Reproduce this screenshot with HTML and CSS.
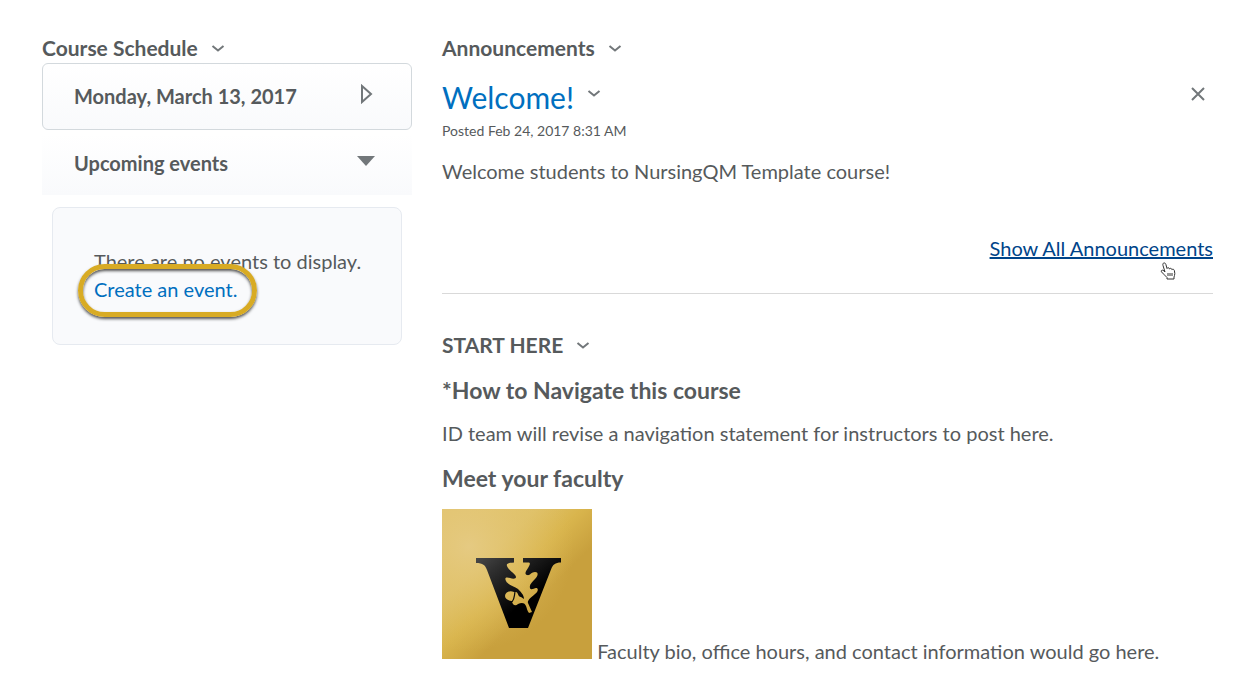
FILE: index.html
```
<!DOCTYPE html>
<html lang="en">
<head>
  <meta charset="UTF-8">
  <meta name="viewport" content="width=device-width, initial-scale=1.0">
  <title>Course Home</title>
  <link rel="stylesheet" href="styles.css">
</head>
<body>
  <div class="homepage">
    <aside class="sidebar">
      <div class="widget-header">
        <h2>Course Schedule</h2>
        <button type="button" class="icon-btn" aria-label="Course Schedule actions">
          <svg class="chevron" viewBox="0 0 16 9"><path d="M2.500 2L8 6.500 13.500 2"/></svg>
        </button>
      </div>

      <button type="button" class="date-bar">
        <span>Monday, March 13, 2017</span>
        <svg class="arrow-right" viewBox="0 0 20 20"><path d="M6 2v16l9-8z"/></svg>
      </button>

      <button type="button" class="events-bar">
        <span>Upcoming events</span>
        <svg class="arrow-down" viewBox="0 0 20 20"><path d="M1 5h18l-9 10z"/></svg>
      </button>

      <div class="events-box">
        <p>There are no events to display.</p>
        <p><a href="#" class="create-link">Create an event.<span class="highlight"></span></a></p>
      </div>
    </aside>

    <main class="content">
      <section class="announcements">
        <div class="widget-header">
          <h2>Announcements</h2>
          <button type="button" class="icon-btn" aria-label="Announcements actions">
            <svg class="chevron" viewBox="0 0 16 9"><path d="M2.500 2L8 6.500 13.500 2"/></svg>
          </button>
        </div>

        <div class="title-row">
          <h3><a href="#">Welcome!</a></h3>
          <button type="button" class="icon-btn" aria-label="Welcome actions">
            <svg class="chevron" viewBox="0 0 16 9"><path d="M2.500 2L8 6.500 13.500 2"/></svg>
          </button>
          <button type="button" class="icon-btn close-btn" aria-label="Dismiss">
            <svg class="close" viewBox="0 0 14 14"><path d="M1 1l12 12M13 1L1 13"/></svg>
          </button>
        </div>
        <p class="posted">Posted Feb 24, 2017 8:31 AM</p>
        <p>Welcome students to NursingQM Template course!</p>

        <div class="show-all">
          <a href="#">Show All Announcements
            <svg class="cursor" viewBox="0 0 16 18"><path d="M5 10L3 3.500C2.600 2 3 1.300 3.800 1c1-.3 1.800.4 2.100 1.500L7 6.500c.3-1.200 2.300-1 2.500.4.700-1 2.200-.6 2.400.7.900-.8 2.300-.2 2.500 1l.4 3c.1 1.500-.6 2.400-.8 3.400V17H7v-1.500C5.500 14 3.300 11.800 1.600 10 .8 9 1.500 8 2.700 8.200c1 .2 1.700 1.100 2.300 1.800M8 11v3M10 11v3M12 11v3"/></svg>
          </a>
        </div>
      </section>

      <section class="start-here">
        <div class="widget-header">
          <h2>START HERE</h2>
          <button type="button" class="icon-btn" aria-label="Start Here actions">
            <svg class="chevron" viewBox="0 0 16 9"><path d="M2.500 2L8 6.500 13.500 2"/></svg>
          </button>
        </div>
        <h3>*How to Navigate this course</h3>
        <p>ID team will revise a navigation statement for instructors to post here.</p>
        <h3>Meet your faculty</h3>
        <div class="faculty">
          <svg class="logo" viewBox="0 0 150 150" role="img" aria-label="Vanderbilt logo">
            <defs>
              <linearGradient id="gold" x1="0.1" y1="0.1" x2="0.8" y2="0.8">
                <stop offset="0" stop-color="#e3c778"/>
                <stop offset="0.3" stop-color="#dfc26b"/>
                <stop offset="0.52" stop-color="#d9b54d"/>
                <stop offset="0.75" stop-color="#c8a03d"/>
                <stop offset="1" stop-color="#c8a03d"/>
              </linearGradient>
              <radialGradient id="shine" cx="0.18" cy="0.25" r="0.7">
                <stop offset="0" stop-color="#e5ca82"/>
                <stop offset="1" stop-color="#e0bd5a" stop-opacity="0"/>
              </radialGradient>
              <linearGradient id="ink" x1="0" y1="0" x2="0.6" y2="0.6">
                <stop offset="0" stop-color="#484848"/>
                <stop offset="0.3" stop-color="#303030"/>
                <stop offset="1" stop-color="#000"/>
              </linearGradient>
              <mask id="leaf">
                <rect width="150" height="150" fill="#fff"/>
                <path d="M72 48h9v5.500h5c3 0 2 2.500 0 5.500-2 3-4 6-1 7 3 1 4-3 8-3 4 0 3 4 0 7s-6 6-5 9c1 3 4 0 6 0 3 0 2 4-1 6-3 3-8 6-7 9l4 9-3 1c-2-2-2-5-3-7-2-4-5-3-8-2-3 3-6 0-6-3-3 0-7-2-7-5 0-4 5-6 9-4l2 0c2 0 2 5 5 5l3 2c0-4-3-7-6-10-4-3-10-4-12-8-2-4 1-4 4-3 3 1 6 1 6-1 0-3-8-7-9-11-1-3 2-3 7-3.500z" fill="#000"/>
                <path d="M73 83c-1 4 0 6-3 10" fill="none" stroke="#fff" stroke-width="1.200"/>
              </mask>
            </defs>
            <rect width="150" height="150" fill="url(#gold)"/>
            <rect width="150" height="150" fill="url(#shine)"/>
            <path mask="url(#leaf)" fill="url(#ink)" d="M34 49h85v4.500c-6 0-8 2-10 7L86 119H67L45 61c-2-5-4-7-11-7z"/>
          </svg>
          Faculty bio, office hours, and contact information would go here.
        </div>
      </section>
    </main>
  </div>
</body>
</html>
```
FILE: styles.css
```
/* General Styles */
* {
  margin: 0;
  padding: 0;
  box-sizing: border-box;
}

body {
  font-family: Lato, sans-serif;
  font-size: 20px;
  line-height: 28px;
  color: #565a5c;
  background: white;
}

a {
  color: #006fbf;
  text-decoration: none;
}

button {
  font: inherit;
  color: inherit;
  background: none;
  border: none;
  cursor: pointer;
}

svg {
  fill: none;
}

.homepage {
  display: grid;
  grid-template-columns: 12fr 25fr;
  gap: 30px;
  padding: 34px 29px 28px 42px;
}

/* Widget headers */
.widget-header {
  display: flex;
  align-items: center;
  gap: 12px;
}

h2 {
  font-size: 21px;
  line-height: 28px;
}

.icon-btn {
  display: flex;
}

.chevron {
  width: 16px;
  height: 9px;
  stroke: #72777a;
  stroke-width: 2;
}

/* Course Schedule */
.date-bar,
.events-bar {
  display: flex;
  justify-content: space-between;
  align-items: center;
  width: 100%;
  font-weight: bold;
  text-align: left;
  background: linear-gradient(white, #f9fafc);
}

.date-bar {
  margin-top: 1px;
  padding: 18px 35px 19px 31px;
  border: 1px solid #d3d9dd;
  border-radius: 6px;
}

.events-bar {
  margin-top: 4px;
  padding: 15px 36px 18px 32px;
}

.arrow-right,
.arrow-down {
  width: 20px;
  height: 20px;
  margin-bottom: 4px;
}

.arrow-right {
  stroke: #72777a;
  stroke-width: 2;
}

.arrow-down path {
  fill: #72777a;
}

.events-box {
  margin: 12px 10px 0;
  padding: 39px 20px 41px 41px;
  background: #f9fafc;
  border: 1px solid #e6eaf0;
  border-radius: 8px;
}

.create-link {
  position: relative;
}

/* Ring around the link */
.highlight {
  position: absolute;
  top: -13px;
  right: -20px;
  bottom: -16px;
  left: -16px;
  border: 5px solid #d8ab24;
  border-radius: 28px;
  box-shadow: 0 2px 3px #555, inset 0 2px 3px #555;
}

/* Announcements */
.announcements {
  padding-bottom: 31px;
  border-bottom: 1px solid #d9d9d9;
}

.title-row {
  display: flex;
  align-items: center;
  gap: 12px;
  margin-top: 16px;
}

.title-row h3 {
  font-size: 30px;
  font-weight: normal;
  line-height: 38px;
}

.title-row .chevron {
  margin-bottom: 8px;
}

.close-btn {
  margin-left: auto;
  padding: 0 8px 6px;
}

.close {
  width: 14px;
  height: 14px;
  stroke: #72777a;
  stroke-width: 2;
}

.posted {
  margin: 3px 0 14px;
  font-size: 14px;
  line-height: 24px;
}

.show-all {
  margin-top: 49px;
  text-align: right;
}

.show-all a {
  position: relative;
  color: #004489;
  text-decoration: underline;
}

.cursor {
  position: absolute;
  right: 37px;
  top: 26px;
  width: 16px;
  height: 18px;
  fill: white;
  stroke: #333;
  stroke-width: 1;
}

/* Start Here */
.start-here {
  padding-top: 37px;
}

.start-here h3 {
  margin: 15px 0 13px;
  font-size: 23px;
  line-height: 32px;
}

.faculty {
  margin-top: 15px;
}

.logo {
  width: 150px;
  height: 150px;
  vertical-align: baseline;
}
```
